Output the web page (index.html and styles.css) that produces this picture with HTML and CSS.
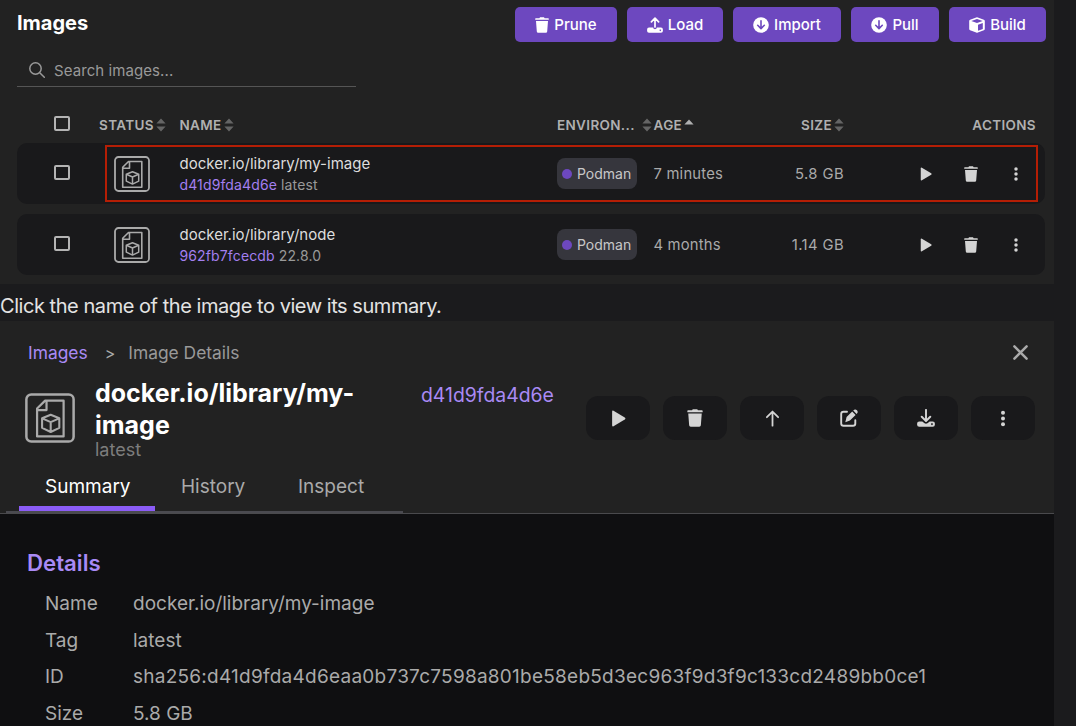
FILE: index.html
```html
<!DOCTYPE html>
<html lang="en">

<head>
    <meta charset="UTF-8">
    <meta name="viewport" content="width=device-width, initial-scale=1.0">
    <title>Images</title>
    <link rel="stylesheet" href="styles.css">
</head>

<body>
    <!-- shared icons -->
    <svg class="sprite" width="0" height="0">
        <symbol id="trash" viewBox="0 0 14 16">
            <path d="M.8 1.200h3.600L5 .3h4l.6.9h3.600q.6 0 .6.6v1H.2v-1q0-.6.6-.6zM1 4h12l-.8 10.500q-.1 1.300-1.400 1.300H3.200q-1.300 0-1.400-1.300z" fill="currentColor" />
        </symbol>
        <symbol id="play" viewBox="0 0 14 16">
            <path d="M1 1.600v12.800q0 1.500 1.300.8l10.600-6.300q1.200-.9 0-1.800L2.300.8Q1 .1 1 1.600z" fill="currentColor" />
        </symbol>
        <symbol id="dots" viewBox="0 0 6 16">
            <g fill="currentColor">
                <circle cx="3" cy="2.200" r="2" />
                <circle cx="3" cy="8" r="2" />
                <circle cx="3" cy="13.800" r="2" />
            </g>
        </symbol>
        <symbol id="circle-down" viewBox="0 0 16 16">
            <circle cx="8" cy="8" r="7.800" fill="currentColor" />
            <path d="M8 3.800v7.600M4.700 8.300L8 11.600l3.300-3.300" fill="none" stroke="#6d48bf" stroke-width="1.600" stroke-linecap="round" stroke-linejoin="round" />
        </symbol>
        <symbol id="upload" viewBox="0 0 16 16">
            <path d="M8 10V1.400M4.400 4.800L8 1.200l3.600 3.600" fill="none" stroke="currentColor" stroke-width="1.700" stroke-linecap="round" stroke-linejoin="round" />
            <path d="M2 10.600h4.200q0 1.600 1.800 1.600t1.800-1.600H14q1.900 0 1.900 2v1.400q0 1.700-1.900 1.700H2q-1.900 0-1.900-1.700v-1.400q0-2 1.900-2zM13.300 12.400a.8.8 0 1 0 .01 0z" fill="currentColor" fill-rule="evenodd" />
        </symbol>
        <symbol id="download" viewBox="0 0 16 16">
            <path d="M8 .8v9.200M4.200 6.900L8 10.700l3.800-3.800" fill="none" stroke="currentColor" stroke-width="1.700" stroke-linecap="round" stroke-linejoin="round" />
            <path d="M2 11h2.700l2 1.700q1.300.8 2.600 0l2-1.700H14q1.900 0 1.900 1.800v1.300q0 1.700-1.900 1.700H2q-1.900 0-1.900-1.700v-1.300q0-1.800 1.900-1.800zM13.300 12.600a.8.8 0 1 0 .01 0z" fill="currentColor" fill-rule="evenodd" />
        </symbol>
        <symbol id="cube" viewBox="0 0 16 16">
            <path d="M7.200.5q.8-.4 1.600 0L14.900 2.700q.9.400.9 1.300v8q0 .9-.9 1.300L8.800 15.500q-.8.400-1.600 0L1.100 13.300Q.2 12.900.2 12V4q0-.9.9-1.300z" fill="currentColor" />
            <path d="M2.300 4.100L8 6.100l5.700-2L8 2.100zM9 7.800l4.800-1.700v5.800L9 13.700z" fill="#6d48bf" />
        </symbol>
        <symbol id="sort" viewBox="0 0 10 14">
            <path d="M5 .6l4.600 5H.4zM5 13.400L.4 8.400h9.200z" fill="currentColor" />
        </symbol>
        <symbol id="image" viewBox="0 0 36 36">
            <g fill="none" stroke="currentColor" stroke-linejoin="round">
                <rect x="1" y="1" width="34" height="34" rx="3.500" stroke-width="1.800" />
                <path d="M14.500 5.500h13.300v25.800H8.700V11.200zM15.500 5.600v6.700H8.800" stroke-width="1.600" />
                <path d="M18.500 15.700l6.200 2.500v6.900l-6.200 3-6.200-3v-6.900zM12.400 18.300l6.100 2.700 6.100-2.700M18.500 21v7" stroke-width="1.500" />
            </g>
        </symbol>
    </svg>

    <section class="images-panel">
        <div class="top-bar">
            <h1>Images</h1>
            <div class="buttons">
                <button class="btn prune"><svg class="trash-icon"><use href="#trash" /></svg>Prune</button>
                <button class="btn load"><svg><use href="#upload" /></svg>Load</button>
                <button class="btn import"><svg><use href="#circle-down" /></svg>Import</button>
                <button class="btn pull"><svg><use href="#circle-down" /></svg>Pull</button>
                <button class="btn build"><svg><use href="#cube" /></svg>Build</button>
            </div>
        </div>

        <div class="search">
            <svg viewBox="0 0 16 16" width="16" height="16">
                <path d="M11 11l4.300 4.300M12.200 6.500a5.700 5.700 0 1 1-11.400 0 5.700 5.700 0 0 1 11.400 0z" fill="none" stroke="currentColor" stroke-width="1.500" stroke-linecap="round" />
            </svg>
            <span>Search images...</span>
        </div>

        <div class="table-head grid">
            <span class="checkbox"></span>
            <span class="cell">STATUS<svg class="sort"><use href="#sort" /></svg></span>
            <span class="cell">NAME<svg class="sort"><use href="#sort" /></svg></span>
            <span class="cell environment">ENVIRON...<svg class="sort"><use href="#sort" /></svg></span>
            <span class="cell">AGE<svg class="sort-up" viewBox="0 0 10 6"><path d="M5 .4L9.600 5.400H.4z" fill="currentColor" /></svg></span>
            <span class="cell right">SIZE<svg class="sort"><use href="#sort" /></svg></span>
            <span class="cell right">ACTIONS</span>
        </div>

        <div class="row grid highlighted">
            <span class="checkbox"></span>
            <svg class="image-icon"><use href="#image" /></svg>
            <div class="name">
                <div class="title">docker.io/library/my-image</div>
                <div class="sub"><span class="id">d41d9fda4d6e</span> latest</div>
            </div>
            <span class="badge"><i></i>Podman</span>
            <span class="age">7 minutes</span>
            <span class="size">5.8 GB</span>
            <div class="row-actions">
                <svg class="play"><use href="#play" /></svg>
                <svg class="trash"><use href="#trash" /></svg>
                <svg class="dots"><use href="#dots" /></svg>
            </div>
        </div>

        <div class="row grid">
            <span class="checkbox"></span>
            <svg class="image-icon"><use href="#image" /></svg>
            <div class="name">
                <div class="title">docker.io/library/node</div>
                <div class="sub"><span class="id">962fb7fcecdb</span> 22.8.0</div>
            </div>
            <span class="badge"><i></i>Podman</span>
            <span class="age">4 months</span>
            <span class="size">1.14 GB</span>
            <div class="row-actions">
                <svg class="play"><use href="#play" /></svg>
                <svg class="trash"><use href="#trash" /></svg>
                <svg class="dots"><use href="#dots" /></svg>
            </div>
        </div>
    </section>

    <p class="caption">Click the name of the image to view its summary.</p>

    <section class="details-panel">
        <div class="breadcrumb">
            <a class="link">Images</a>
            <span class="arrow">&gt;</span>
            <span class="current">Image Details</span>
            <svg class="close" viewBox="0 0 14 14" width="15" height="15">
                <path d="M1.300 1.300l11.400 11.400M12.700 1.300L1.300 12.700" stroke="currentColor" stroke-width="2.300" stroke-linecap="round" />
            </svg>
        </div>

        <div class="details-head">
            <svg class="big-icon"><use href="#image" /></svg>
            <div class="heading">
                <h2>docker.io/library/my-image</h2>
                <div class="tag">latest</div>
            </div>
            <span class="short-id">d41d9fda4d6e</span>
            <div class="details-actions">
                <button class="action"><svg class="play"><use href="#play" /></svg></button>
                <button class="action"><svg class="trash"><use href="#trash" /></svg></button>
                <button class="action">
                    <svg viewBox="0 0 16 18" width="15" height="17">
                        <path d="M8 16.700V1.800M2 7.600l6-6 6 6" fill="none" stroke="currentColor" stroke-width="1.900" stroke-linecap="round" stroke-linejoin="round" />
                    </svg>
                </button>
                <button class="action">
                    <svg viewBox="0 0 18 18" width="18" height="18">
                        <path d="M7 2.700H3.500q-2.300 0-2.300 2.300v9.500q0 2.300 2.300 2.300H13q2.300 0 2.300-2.300V11.300" fill="none" stroke="currentColor" stroke-width="1.900" stroke-linecap="round" />
                        <path d="M12.200 2.500l3.400 3.400-5.700 5.700-4.600 1.600 1.300-5.100zM13.200 1.500q1.900-2 3.700-.300 1.700 1.800-.300 3.700z" fill="currentColor" />
                    </svg>
                </button>
                <button class="action"><svg class="download"><use href="#download" /></svg></button>
                <button class="action"><svg class="dots"><use href="#dots" /></svg></button>
            </div>
        </div>

        <div class="tabs">
            <span class="tab active">Summary</span>
            <span class="tab history">History</span>
            <span class="tab inspect">Inspect</span>
        </div>

        <div class="summary">
            <h3>Details</h3>
            <dl>
                <dt>Name</dt>
                <dd>docker.io/library/my-image</dd>
                <dt>Tag</dt>
                <dd>latest</dd>
                <dt>ID</dt>
                <dd class="hash">sha256:d41d9fda4d6eaa0b737c7598a801be58eb5d3ec963f9d3f9c133cd2489bb0ce1</dd>
                <dt>Size</dt>
                <dd>5.8 GB</dd>
            </dl>
        </div>
    </section>
</body>

</html>
```
FILE: styles.css
```css
*,
*::after {
    box-sizing: border-box;
}

body {
    margin: 0;
    height: 726px;
    overflow: hidden;
    background-color: #1b1b1d;
    color: #aaa;
    font-family: Inter, "Liberation Sans", sans-serif;
}

h1,
h2,
h3,
p,
dl,
dd {
    margin: 0;
}

button {
    border: none;
    font-family: inherit;
    padding: 0;
}

.sprite {
    position: absolute;
}

.images-panel {
    width: 1054px;
    height: 284px;
    background-color: #222;
}

.top-bar {
    display: flex;
    justify-content: space-between;
    padding: 7px 8px 0 17px;
}

h1 {
    color: #fff;
    font-size: 20px;
    line-height: 32px;
}

.buttons {
    display: flex;
    gap: 10px;
}

.btn {
    display: flex;
    align-items: center;
    justify-content: center;
    gap: 5px;
    height: 35px;
    border-radius: 5px;
    background-color: #6d48bf;
    color: #fff;
    font-size: 15px;
    font-weight: 500;
}

.btn svg {
    width: 16px;
    height: 16px;
}

.btn .trash-icon {
    width: 14px;
}

.prune {
    width: 102px;
}

.load {
    width: 96px;
}

.import {
    width: 108px;
}

.pull {
    width: 88px;
}

.build {
    width: 97px;
}

.search {
    display: flex;
    align-items: center;
    gap: 9px;
    width: 339px;
    height: 34px;
    margin: 11px 0 0 17px;
    padding-left: 12px;
    border-bottom: 1px solid #555;
    font-size: 15px;
    letter-spacing: 0.08px;
    color: #999;
}

.search span {
    padding-top: 1px;
}

.grid {
    display: grid;
    grid-template-columns: 45px 80.500px 377.500px 96.500px 110.500px 80px 1fr;
    align-items: center;
    width: 1028px;
    margin-left: 17px;
    padding: 0 9px 0 37px;
}

.checkbox {
    width: 16px;
    height: 15px;
    margin-bottom: 3px;
    border: 2px solid #b4b4b4;
    border-radius: 2px;
}

.table-head {
    height: 56px;
    padding-top: 20px;
    font-size: 13.500px;
    font-weight: 600;
    letter-spacing: 0.350px;
    color: #b0b0b0;
}

.cell {
    display: flex;
    align-items: center;
    gap: 2px;
}

.environment {
    justify-content: space-between;
    padding-right: 2px;
}

.right {
    justify-content: flex-end;
}

.sort {
    width: 10px;
    height: 14px;
    color: #656565;
}

.sort-up {
    width: 10px;
    height: 6px;
    margin-bottom: 7px;
}

.row {
    position: relative;
    height: 61px;
    margin-bottom: 10px;
    border-radius: 10px;
    background-color: #19191b;
}

/* red outline around the selected image */
.highlighted::after {
    content: "";
    position: absolute;
    left: 88px;
    top: 2px;
    width: 933px;
    height: 57px;
    border: 2px solid #b51e05;
}

.image-icon {
    width: 36px;
    height: 36px;
    margin-left: 15px;
}

.title {
    color: #ddd;
    font-size: 15px;
    line-height: 21px;
}

.sub {
    font-size: 14px;
    line-height: 21px;
    letter-spacing: 0.130px;
    color: #999;
}

.id {
    color: #a37ff0;
}

.badge {
    display: flex;
    align-items: center;
    gap: 5px;
    width: 80px;
    height: 31px;
    padding-left: 5px;
    border-radius: 8px;
    background-color: #36363d;
    color: #c8c8c8;
    font-size: 14px;
}

.badge i {
    width: 10px;
    height: 10px;
    border-radius: 50%;
    background-color: #6d48bf;
}

.age,
.size {
    font-size: 14.800px;
    letter-spacing: 0.200px;
}

.size {
    text-align: right;
    letter-spacing: 0.400px;
}

.row-actions {
    display: grid;
    grid-template-columns: repeat(3, 45px);
    justify-content: end;
    justify-items: center;
    align-items: center;
    margin-right: -2px;
    color: #d4d4d4;
}

.play {
    width: 14px;
    height: 14px;
}

.trash {
    width: 14px;
    height: 16px;
}

.dots {
    width: 6px;
    height: 14px;
}

.caption {
    height: 37px;
    color: #e3e3e3;
    font-size: 20px;
    line-height: 44px;
    letter-spacing: -0.450px;
}

.details-panel {
    width: 1054px;
    height: 405px;
    background-color: #222;
}

.breadcrumb {
    display: flex;
    align-items: center;
    height: 63px;
    padding: 0 26px 0 28px;
    font-size: 17.400px;
}

.link {
    color: #a98af5;
}

.arrow {
    margin: 0 13px 0 17px;
    font-size: 16px;
}

.current {
    color: #999;
}

.close {
    margin-left: auto;
    color: #aaa;
}

.details-head {
    display: flex;
    height: 84px;
    padding-left: 25px;
}

.big-icon {
    width: 50px;
    height: 50px;
    margin-top: 9px;
}

.heading {
    width: 346px;
    padding: 0 60px 0 20px;
    margin-top: -7px;
}

h2 {
    color: #fff;
    font-size: 25px;
    line-height: 32px;
}

.tag {
    color: #7d7d7d;
    font-size: 18px;
    line-height: 18px;
}

.short-id {
    width: 165px;
    color: #a98af5;
    font-size: 19.400px;
    line-height: 23px;
}

.details-actions {
    display: flex;
    gap: 13px;
    margin-top: 12px;
}

.action {
    display: flex;
    align-items: center;
    justify-content: center;
    width: 64px;
    height: 44px;
    border-radius: 12px;
    background-color: #19191b;
    color: #d4d4d4;
}

.action .play {
    width: 15px;
    height: 17px;
}

.action .trash {
    width: 16px;
    height: 18px;
}

.action .download {
    width: 18px;
    height: 18px;
}

.action .dots {
    height: 17px;
}

.tabs {
    display: flex;
    width: 397px;
    height: 45px;
    margin-left: 6px;
    padding-left: 13px;
    border-bottom: 2px solid #4a4a50;
    font-size: 19px;
    line-height: 38px;
}

.tab {
    padding-left: 26px;
}

.active {
    width: 136px;
    border-bottom: 5px solid #8b5cf6;
    color: #fff;
}

.history {
    width: 117px;
}

.summary {
    height: 213px;
    padding: 31px 0 0 27px;
    border-top: 1px solid #4a4a4d;
    background-color: #0f0f11;
}

h3 {
    color: #a98af5;
    font-size: 22.200px;
    line-height: 36px;
    font-weight: 600;
}

dl {
    display: grid;
    grid-template-columns: 88px 1fr;
    grid-auto-rows: 36.700px;
    padding: 5px 0 0 18px;
    font-size: 19px;
    line-height: 36px;
}

.hash {
    letter-spacing: 0.250px;
}
```
